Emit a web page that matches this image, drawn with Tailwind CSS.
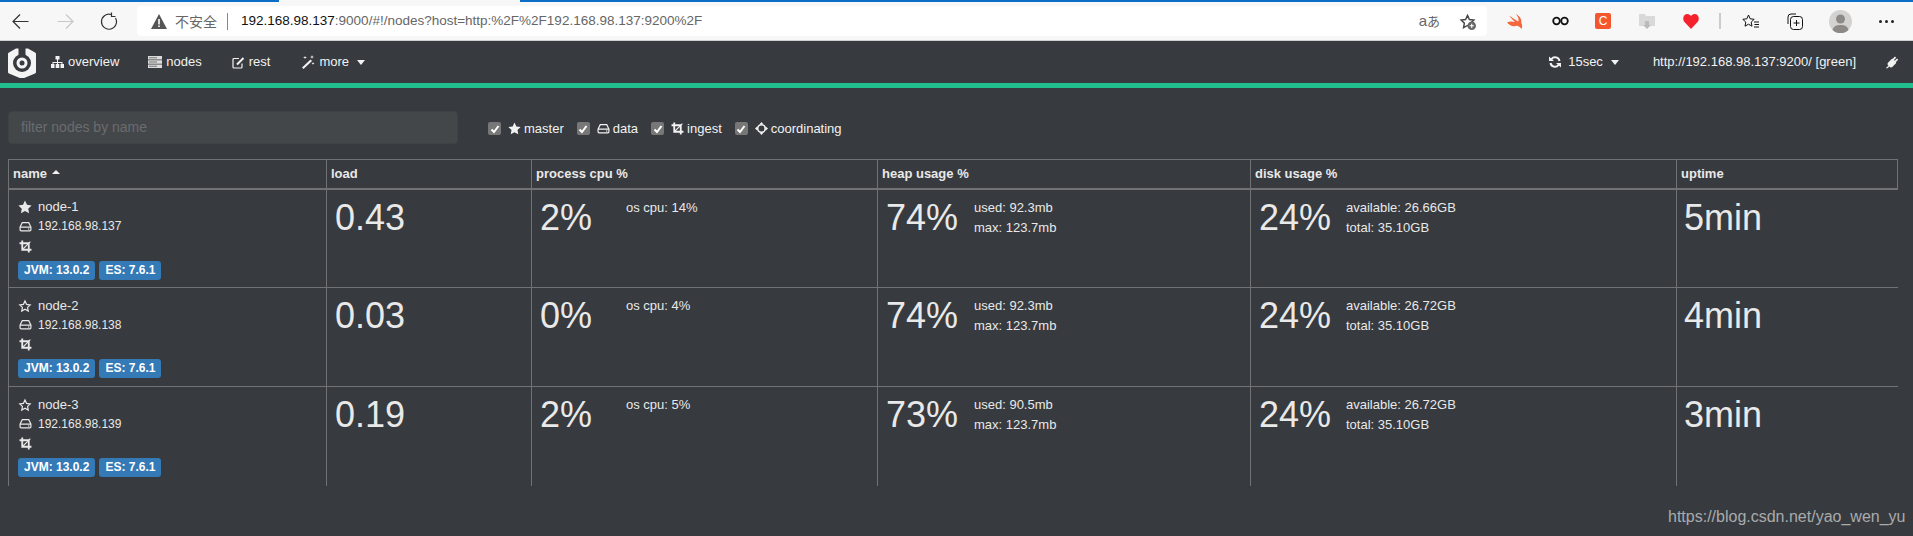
<!DOCTYPE html>
<html lang="en">
<head>
    <meta charset="UTF-8">
    <title>cerebro nodes</title>
    <script src="https://cdn.jsdelivr.net/npm/@tailwindcss/browser@4"></script>
</head>
<body class="bg-[#373a3e] h-[536px] overflow-hidden relative text-[13px] text-[#e9e9e9] font-['Liberation_Sans',Arial,sans-serif]">
    <svg class="hidden">
        <symbol id="star" viewBox="0 0 24 24"><path fill="currentColor" d="M12 1l3.400 7.300 7.900 1-5.800 5.500 1.500 7.900L12 18.800l-7 3.900 1.500-7.900L.7 9.300l7.900-1z"/></symbol>
        <symbol id="star-o" viewBox="0 0 24 24"><path fill="none" stroke="currentColor" stroke-width="2" d="M12 3.400l2.700 5.800 6.300.8-4.600 4.400 1.200 6.300-5.600-3.100-5.600 3.100 1.200-6.300L3 10l6.300-.8z"/></symbol>
        <symbol id="hdd" viewBox="0 0 24 24"><path fill="none" stroke="currentColor" stroke-width="2.200" d="M6 5h12l4 8v5a2 2 0 0 1-2 2H4a2 2 0 0 1-2-2v-5zM2 13h20"/><circle cx="18" cy="16.500" r="1.300" fill="currentColor"/></symbol>
        <symbol id="crop" viewBox="0 0 24 24"><path fill="none" stroke="currentColor" stroke-width="3.400" d="M6 1v17h17M1 6h17v17"/><path stroke="currentColor" stroke-width="2" d="M6 18L21 3"/></symbol>
        <symbol id="target" viewBox="0 0 24 24"><circle cx="12" cy="12" r="7" fill="none" stroke="currentColor" stroke-width="3"/><path fill="currentColor" d="M8.500 4L12 0l3.500 4zM8.500 20l3.500 4 3.500-4zM4 8.500L0 12l4 3.500zM20 8.500l4 3.500-4 3.500z"/></symbol>
    </svg>

    <!-- browser chrome -->
    <div class="h-[41px] bg-[#f7f7f7] border-b border-[#d0d0d0] relative text-[#333]">
        <div class="absolute top-0 left-0 right-0 h-[2px] bg-[#0b6fc6]"></div>
        <div class="absolute top-0 left-[279px] w-[241px] h-[2px] bg-[#f7f7f7]"></div>
        <div class="flex items-center h-[40px] pt-[2px]">
            <svg class="ml-[12px] w-[17px] h-[17px]" viewBox="0 0 17 17" fill="none" stroke="#333" stroke-width="1.200"><path d="M16.500 8.500H1M8 1.500L1 8.500l7 7"/></svg>
            <svg class="ml-[28px] w-[17px] h-[17px]" viewBox="0 0 17 17" fill="none" stroke="#c8c8c8" stroke-width="1.200"><path d="M.5 8.500H16M9 1.500l7 7-7 7"/></svg>
            <svg class="ml-[26px] w-[18px] h-[18px]" viewBox="0 0 18 18" fill="none" stroke="#333" stroke-width="1.200"><path d="M11 2.500A7.500 7.500 0 1 0 15.500 6M11.500.5v4h4"/></svg>
            <div class="ml-[19px] w-[1350px] h-[30px] bg-white rounded-[4px] flex items-center">
                <svg class="ml-[14px] w-[16px] h-[15px]" viewBox="0 0 16 15"><path fill="#555" d="M8 0l8 15H0z"/><path fill="#fff" d="M7.200 5h1.600v5.500H7.200zM7.200 11.500h1.600V13H7.200z"/></svg>
                <span class="ml-[8px] text-[14px] text-[#666] font-['Noto_Sans_CJK_SC',sans-serif]">不安全</span>
                <span class="ml-[10px] w-px h-[17px] bg-[#888]"></span>
                <span class="ml-[13px] text-[13.500px] text-[#666]"><span class="text-[#111]">192.168.98.137</span>:9000/#!/nodes?host=http:%2F%2F192.168.98.137:9200%2F</span>
                <span class="ml-auto text-[15px] text-[#666]">a<span class="font-['Noto_Sans_CJK_JP',sans-serif] text-[13px]">あ</span></span>
                <svg class="ml-[19px] mr-[11px] w-[17px] h-[17px] text-[#444]" viewBox="0 0 24 24"><use href="#star-o"/><circle cx="18" cy="18" r="6" fill="#666"/><path stroke="#fff" stroke-width="1.500" d="M18 15v6M15 18h6"/></svg>
            </div>
            <svg class="ml-[20px] w-[16px] h-[15px]" viewBox="0 0 16 15"><path fill="#f4663b" d="M0 8.500c2.500 3 6 4.500 8.500 3.500 2-1 4.500 1 6 3 1-2.500.8-4.500-.2-6C15 5 12.500 2 9 0c2 2.500 3.200 5.500 2.300 7.500C8.500 6 5 3.500 2 1.500c2 2.500 4 4.500 6 6.500C5.500 7.200 2.500 7 0 8.500z"/></svg>
            <svg class="ml-[29px] w-[17px] h-[10px]" viewBox="0 0 17 10" fill="none" stroke="#111" stroke-width="1.800"><circle cx="4.500" cy="5" r="3.300"/><circle cx="12.500" cy="5" r="3.300"/></svg>
            <span class="ml-[26px] w-[16px] h-[16px] rounded-[2px] bg-[#f4572e] text-white text-[12px] leading-[16px] text-center">C</span>
            <svg class="ml-[28px] w-[16px] h-[16px]" viewBox="0 0 16 16"><path fill="#d9d9d9" d="M0 1h6l1 2h9v10H0z"/><path fill="#bbb" d="M6 8h4v4h2l-4 4-4-4h2z"/></svg>
            <svg class="ml-[28px] w-[16px] h-[15px]" viewBox="0 0 16 15"><path fill="#f5222d" d="M8 15L1 7.500C-1 4 1 0 4.500 0 6 0 7.300 1 8 2.200 8.700 1 10 0 11.500 0 15 0 17 4 15 7.500z"/></svg>
            <span class="ml-[20px] w-[2px] h-[16px] bg-[#ccc]"></span>
            <svg class="ml-[21px] w-[17px] h-[17px]" viewBox="0 0 17 17" fill="none" stroke="#111"><path d="M6.500 2l1.700 3.800 4 .5-3 2.800.8 4.100-3.500-2-3.500 2 .8-4.100-3-2.800 4-.5z"/><path d="M12 9h5M12.500 11.500H17M12 14h5"/></svg>
            <svg class="ml-[27px] w-[17px] h-[17px]" viewBox="0 0 17 17" fill="none" stroke="#111"><path d="M2 11V4a3 3 0 0 1 3-3h5"/><rect x="4.500" y="3.500" width="12" height="13" rx="3"/><path d="M10.500 7v6M7.500 10h6"/></svg>
            <svg class="ml-[26px] w-[23px] h-[23px]" viewBox="0 0 23 23"><circle cx="11.500" cy="11.500" r="11.500" fill="#d3d2d0"/><circle cx="11.500" cy="9" r="4.500" fill="#8b8a88"/><path fill="#8b8a88" d="M3.500 20c1-4 4-5 8-5s7 1 8 5a11.500 11.500 0 0 1-16 0z"/></svg>
            <span class="ml-[27px] flex gap-[3px]"><i class="w-[3px] h-[3px] bg-[#222] rounded-full"></i><i class="w-[3px] h-[3px] bg-[#222] rounded-full"></i><i class="w-[3px] h-[3px] bg-[#222] rounded-full"></i></span>
        </div>
    </div>

    <!-- navbar -->
    <nav class="h-[42px] flex items-center relative text-[#f2f2f2]">
        <svg class="ml-[8px] w-[28px] h-[30px] mt-[2px]" viewBox="0 0 28 30"><path fill="#f4f4f4" d="M8 0.500l12 0 7 4a2 2 0 0 1 1 2v17a2 2 0 0 1-1 2l-12 5a3 3 0 0 1-2 0L1 25.500a2 2 0 0 1-1-2v-17a2 2 0 0 1 1-2z"/><circle cx="14" cy="15" r="9" fill="#373a3e"/><rect x="10.500" y="0" width="7" height="8" fill="#373a3e"/><circle cx="14" cy="15" r="5.500" fill="#f4f4f4"/><circle cx="14" cy="15" r="2.500" fill="#373a3e"/></svg>
        <svg class="ml-[15px] w-[13px] h-[12px]" viewBox="0 0 13 12" fill="currentColor"><path d="M4.500 0h4v3.500h-4zM0 8h3.500v4H0zM4.700 8h3.600v4H4.700zM9.500 8H13v4H9.500zM6 3.500h1V6h4.500v2h-1V7h-3.500v1H6V7H2.500v1h-1V6H6z"/></svg>
        <span class="ml-[4px]">overview</span>
        <svg class="ml-[29px] w-[14px] h-[12px]" viewBox="0 0 14 12"><path fill="#dcdcdc" d="M0 0h14v3.400H0zM0 4.300h14v3.400H0zM0 8.600h14V12H0z"/><path fill="#777" d="M1 1.300h8v1H1zM1 5.500h8v1H1zM1 9.800h8v1H1z"/></svg>
        <span class="ml-[4px]">nodes</span>
        <svg class="ml-[30px] w-[13px] h-[13px]" viewBox="0 0 13 13" fill="none" stroke="currentColor" stroke-width="1.200"><path d="M10 7.500V11a1 1 0 0 1-1 1H2a1 1 0 0 1-1-1V3.500a1 1 0 0 1 1-1h5"/><path stroke-width="2" d="M5 8.500L11.500 2"/></svg>
        <span class="ml-[4px]">rest</span>
        <svg class="ml-[31px] w-[14px] h-[14px]" viewBox="0 0 14 14" fill="currentColor"><path d="M9.500 4.500l1.500 1.500-8.500 8L1 12.500z"/><path d="M11 0l.5 1.500L13 2l-1.500.5L11 4l-.5-1.500L9 2l1.500-.5zM4 1l.5 1L6 2.500 4.500 3 4 4l-.5-1L2 2.500 3.500 2zM12 7l.4 1 1.100.5-1.100.4-.4 1.100-.4-1.100-1.100-.4 1.100-.5z"/></svg>
        <span class="ml-[4px]">more</span>
        <span class="ml-[8px] border-x-[4px] border-x-transparent border-t-[5px] border-t-[#f2f2f2]"></span>
        <svg class="ml-auto w-[12px] h-[12px]" viewBox="0 0 24 24" fill="none" stroke="currentColor" stroke-width="4"><path d="M21 10a9 9 0 0 0-16-4L3 8M3 14a9 9 0 0 0 16 4l2-2"/><path fill="currentColor" stroke="none" d="M0 1l10 9H0zM24 23l-10-9h10z"/></svg>
        <span class="ml-[7px]">15sec</span>
        <span class="ml-[8px] border-x-[4px] border-x-transparent border-t-[5px] border-t-[#f2f2f2]"></span>
        <span class="ml-[34px]">http://192.168.98.137:9200/ [green]</span>
        <svg class="ml-[29px] mr-[14px] w-[14px] h-[14px]" viewBox="0 0 14 14" fill="currentColor"><path d="M1 13l2.500-2.500-1-1 .2-1.500 4-4 1-.2 3.500 3.500-.2 1-4 4-1.500.2-1-1L2 13.500zM7.500 4L10 1.500l1.200 1.200L8.700 5.200zM9.500 6L12 3.500l1.200 1.200-2.500 2.500z"/></svg>
    </nav>
    <div class="h-[5px] bg-[#1fc08e]"></div>

    <!-- filters -->
    <div class="flex items-center mt-[23px] ml-[8px] h-[33px]">
        <div class="w-[450px] h-[33px] bg-[#44474a] border border-[#3f4245] rounded-[4px] pl-[12px] flex items-center text-[14px] text-[#696c6f]">filter nodes by name</div>
        <div id="filters" class="flex items-center ml-[30px] mt-[2px] text-[#f2f2f2]"></div>
    </div>

    <!-- nodes table -->
    <table class="table-fixed w-[1889px] ml-[8px] mt-[15px] border-collapse">
        <colgroup>
            <col class="w-[318px]"><col class="w-[205px]"><col class="w-[346px]"><col class="w-[373px]"><col class="w-[426px]"><col class="w-[221px]">
        </colgroup>
        <thead>
            <tr class="h-[29px] text-left font-bold">
                <th class="border border-[#707274] border-b-2 pl-[4px]">name <span class="inline-block align-[4px] ml-[1px] border-x-[4px] border-x-transparent border-b-[4px] border-b-[#f2f2f2]"></span></th>
                <th class="border border-[#707274] border-b-2 pl-[4px]">load</th>
                <th class="border border-[#707274] border-b-2 pl-[4px]">process cpu %</th>
                <th class="border border-[#707274] border-b-2 pl-[4px]">heap usage %</th>
                <th class="border border-[#707274] border-b-2 pl-[4px]">disk usage %</th>
                <th class="border border-[#707274] border-b-2 pl-[4px]">uptime</th>
            </tr>
        </thead>
        <tbody id="rows"></tbody>
    </table>

    <div class="absolute left-[1668px] top-[507px] text-[16px] leading-[20px] text-[#a9abad]">https://blog.csdn.net/yao_wen_yu</div>

    <script>
    const FILTERS = [
        { icon: 'star', label: 'master', gap: 'ml-0' },
        { icon: 'hdd', label: 'data', gap: 'ml-[13px]' },
        { icon: 'crop', label: 'ingest', gap: 'ml-[13px]' },
        { icon: 'target', label: 'coordinating', gap: 'ml-[13px]' }
    ];
    const NODES = [
        { name: 'node-1', master: true, ip: '192.168.98.137', load: '0.43', cpu: '2%', os: '14%', heap: '74%', used: '92.3mb', disk: '24%', avail: '26.66GB', up: '5min' },
        { name: 'node-2', master: false, ip: '192.168.98.138', load: '0.03', cpu: '0%', os: '4%', heap: '74%', used: '92.3mb', disk: '24%', avail: '26.72GB', up: '4min' },
        { name: 'node-3', master: false, ip: '192.168.98.139', load: '0.19', cpu: '2%', os: '5%', heap: '73%', used: '90.5mb', disk: '24%', avail: '26.72GB', up: '3min' }
    ];
    const icon = (id, cls) => `<svg class="${cls}"><use href="#${id}"/></svg>`;

    document.getElementById('filters').innerHTML = FILTERS.map(f => `
        <label class="flex items-center ${f.gap}">
            <span class="w-[13px] h-[13px] rounded-[2px] bg-[#777] flex items-center justify-center">
                <svg class="w-[10px] h-[10px]" viewBox="0 0 10 10" fill="none" stroke="#fff" stroke-width="2"><path d="M1.500 5.500l2.500 2.500 4.500-6"/></svg>
            </span>
            ${icon(f.icon, 'ml-[7px] w-[13px] h-[13px]')}
            <span class="ml-[3px]">${f.label}</span>
        </label>
    `).join('');

    const big = 'text-[36px] leading-[40px]';
    document.getElementById('rows').innerHTML = NODES.map(n => `
        <tr class="h-[99px] align-top">
            <td class="border-x border-t border-[#707274] p-0 pl-[9px]">
                <div class="h-[19px] mt-[8px] flex items-center">${icon(n.master ? 'star' : 'star-o', 'w-[14px] h-[14px]')}<span class="ml-[6px]">${n.name}</span></div>
                <div class="h-[19px] flex items-center text-[12px]">${icon('hdd', 'ml-[1px] w-[13px] h-[13px]')}<span class="ml-[6px]">${n.ip}</span></div>
                <div class="h-[19px] mt-[1px] flex items-center">${icon('crop', 'ml-[1px] w-[13px] h-[13px]')}</div>
                <div class="flex gap-[4px] mt-[5px] text-[12px] font-bold text-white">
                    <span class="h-[19px] leading-[18px] px-[6px] rounded-[3px] bg-[#337ab7]">JVM: 13.0.2</span>
                    <span class="h-[19px] leading-[18px] px-[6px] rounded-[3px] bg-[#337ab7]">ES: 7.6.1</span>
                </div>
            </td>
            <td class="border-x border-t border-[#707274] p-0 pl-[8px]"><div class="${big} mt-[8px]">${n.load}</div></td>
            <td class="border-x border-t border-[#707274] p-0 pl-[8px]">
                <div class="flex mt-[8px]"><div class="${big} w-[86px]">${n.cpu}</div><div class="leading-[20px]">os cpu: ${n.os}</div></div>
            </td>
            <td class="border-x border-t border-[#707274] p-0 pl-[8px]">
                <div class="flex mt-[8px]"><div class="${big} w-[88px]">${n.heap}</div><div class="leading-[20px]">used: ${n.used}<br>max: 123.7mb</div></div>
            </td>
            <td class="border-x border-t border-[#707274] p-0 pl-[8px]">
                <div class="flex mt-[8px]"><div class="${big} w-[87px]">${n.disk}</div><div class="leading-[20px]">available: ${n.avail}<br>total: 35.10GB</div></div>
            </td>
            <td class="border-l border-t border-[#707274] p-0 pl-[7px]"><div class="${big} mt-[8px]">${n.up}</div></td>
        </tr>
    `).join('');
    </script>
</body>
</html>
